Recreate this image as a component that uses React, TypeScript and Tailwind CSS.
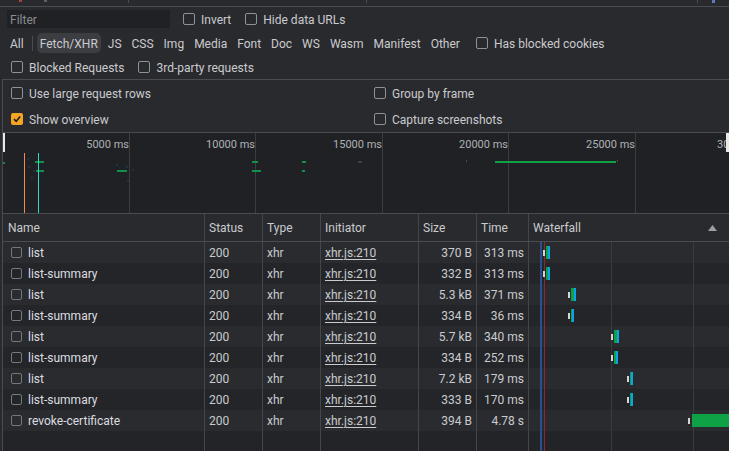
import React from "react";

interface Bar {
  left: number;
  width: number;
  kind: "w" | "g" | "b";
}

interface Req {
  name: string;
  size: string;
  time: string;
  bars: Bar[];
}

const reqs: Req[] = [
  { name: "list", size: "370 B", time: "313 ms", bars: [{ left: 14, width: 2, kind: "w" }, { left: 17, width: 2, kind: "g" }, { left: 19, width: 2, kind: "b" }] },
  { name: "list-summary", size: "332 B", time: "313 ms", bars: [{ left: 14, width: 2, kind: "w" }, { left: 17, width: 2, kind: "g" }, { left: 19, width: 2, kind: "b" }] },
  { name: "list", size: "5.3 kB", time: "371 ms", bars: [{ left: 39, width: 2, kind: "w" }, { left: 42, width: 3, kind: "g" }, { left: 45, width: 2, kind: "b" }] },
  { name: "list-summary", size: "334 B", time: "36 ms", bars: [{ left: 39, width: 2, kind: "w" }, { left: 42, width: 1, kind: "g" }, { left: 43, width: 2, kind: "b" }] },
  { name: "list", size: "5.7 kB", time: "340 ms", bars: [{ left: 82, width: 2, kind: "w" }, { left: 85, width: 3, kind: "g" }, { left: 88, width: 2, kind: "b" }] },
  { name: "list-summary", size: "334 B", time: "252 ms", bars: [{ left: 82, width: 2, kind: "w" }, { left: 85, width: 2, kind: "g" }, { left: 87, width: 2, kind: "b" }] },
  { name: "list", size: "7.2 kB", time: "179 ms", bars: [{ left: 98, width: 2, kind: "w" }, { left: 101, width: 1, kind: "g" }, { left: 102, width: 2, kind: "b" }] },
  { name: "list-summary", size: "333 B", time: "170 ms", bars: [{ left: 98, width: 2, kind: "w" }, { left: 101, width: 1, kind: "g" }, { left: 102, width: 2, kind: "b" }] },
  { name: "revoke-certificate", size: "394 B", time: "4.78 s", bars: [{ left: 159, width: 2, kind: "w" }, { left: 163, width: 40, kind: "g" }] },
];

const types = ["Fetch/XHR", "JS", "CSS", "Img", "Media", "Font", "Doc", "WS", "Wasm", "Manifest", "Other"];

// overview marks: [x, y, w, color]
const marks: [number, number, number, string][] = [
  [0, 29, 2, "#128a43"],
  [32, 28, 9, "#12904a"],
  [33, 37, 8, "#12904a"],
  [114, 37, 10, "#12904a"],
  [249, 28, 6, "#12904a"],
  [249, 37, 9, "#12904a"],
  [299, 28, 4, "#12904a"],
  [299, 37, 3, "#12904a"],
  [492, 28, 121, "#0ea145"],
  [24, 25, 2, "#1d3444"],
  [25, 33, 2, "#1d3444"],
  [28, 44, 2, "#1d3444"],
  [30, 37, 2, "#1d3444"],
  [113, 31, 2, "#1d3444"],
  [123, 33, 2, "#1d3444"],
  [124, 47, 2, "#1d3444"],
  [129, 36, 2, "#1d3444"],
  [355, 28, 4, "#3a3c40"],
  [463, 27, 1, "#4a4c50"],
  [614, 27, 1, "#4a4c50"],
];

const labels: [number, string][] = [
  [126, "5000 ms"],
  [252, "10000 ms"],
  [379, "15000 ms"],
  [505, "20000 ms"],
  [632, "25000 ms"],
];

function Box({ checked = false }: { checked?: boolean }) {
  if (checked) {
    return (
      <span className="flex h-[12px] w-[12px] shrink-0 items-center justify-center rounded-[2px] bg-[#f5a524]">
        <svg width="10" height="10" viewBox="0 0 10 10">
          <path d="M2 5.2 L4.2 7.3 L8.2 2.6" fill="none" stroke="#1f1f1f" strokeWidth="1.6" />
        </svg>
      </span>
    );
  }
  return <span className="h-[12px] w-[12px] shrink-0 rounded-[2px] border border-[#8e9196]" />;
}

function Check({ label, checked }: { label: string; checked?: boolean }) {
  return (
    <span className="flex items-center gap-[6px]">
      <Box checked={checked} />
      <span className="pt-[2px]">{label}</span>
    </span>
  );
}

const barColor = { w: "bg-[#d6d6d6]", g: "bg-[#0ea145]", b: "bg-[#0aa3ee]" };

export default function App() {
  return (
    <div className="flex h-[451px] w-[729px] flex-col overflow-hidden bg-[#292a2d] font-['Roboto',sans-serif] text-[12px] leading-none text-[#c9cbcf]">
      {/* clipped toolbar above */}
      <div className="relative h-[7px] shrink-0 border-b border-[#4a4c50]">
        <span className="absolute left-[19px] top-0 h-[2px] w-[3px] bg-[#a0443c]" />
        <span className="absolute left-[44px] top-0 h-[2px] w-[3px] bg-[#5f6368]" />
        <span className="absolute left-[128px] top-0 h-[3px] w-[1px] bg-[#4a4c50]" />
        <span className="absolute left-[366px] top-0 h-[3px] w-[1px] bg-[#4a4c50]" />
        <span className="absolute left-[697px] top-0 h-[3px] w-[1px] bg-[#4a4c50]" />
        <span className="absolute left-[712px] top-0 h-[3px] w-[3px] bg-[#5a7db8]" />
      </div>

      {/* filter row */}
      <div className="flex h-[24px] shrink-0 items-center pl-[7px]">
        <div className="flex h-[18px] w-[163px] items-center bg-[#202124] pl-[3px] pt-[1px] text-[#8a8d91]">Filter</div>
        <span className="ml-[13px]">
          <Check label="Invert" />
        </span>
        <span className="ml-[14px]">
          <Check label="Hide data URLs" />
        </span>
      </div>

      {/* type filters */}
      <div className="flex h-[24px] shrink-0 items-center pl-[10px]">
        <span className="pt-[2px]">All</span>
        <span className="ml-[8px] mr-[4px] h-[15px] w-[1px] bg-[#4a4c50]" />
        <div className="flex items-center gap-[4px]">
          {types.map((t, i) => (
            <span
              key={t}
              className={`flex h-[20px] items-center rounded-[5px] px-[3px] pt-[2px] ${i === 0 ? "bg-[#3c3d41]" : ""}`}
            >
              {t}
            </span>
          ))}
        </div>
        <span className="ml-[13px]">
          <Check label="Has blocked cookies" />
        </span>
      </div>

      <div className="flex h-[24px] shrink-0 items-center gap-[14px] pl-[11px]">
        <Check label="Blocked Requests" />
        <Check label="3rd-party requests" />
      </div>

      <div className="ml-[2px] flex min-h-0 flex-1 flex-col border-l border-t border-[#4a4c50]">
        {/* settings */}
        <div className="grid shrink-0 grid-cols-[363px_1fr] border-b border-[#4a4c50] pl-[8px]">
          <div className="flex h-[26px] items-center">
            <Check label="Use large request rows" />
          </div>
          <div className="flex h-[26px] items-center">
            <Check label="Group by frame" />
          </div>
          <div className="flex h-[26px] items-center">
            <Check label="Show overview" checked />
          </div>
          <div className="flex h-[26px] items-center">
            <Check label="Capture screenshots" />
          </div>
        </div>

        {/* overview */}
        <div className="relative h-[81px] shrink-0 border-b border-[#4a4c50] bg-[#202124] text-[11px] text-[#aeb1b5]">
          {labels.map(([x]) => (
            <span key={x} className="absolute top-0 h-full w-[1px] bg-[#3c3d41]" style={{ left: x }} />
          ))}
          {labels.map(([x, t]) => (
            <span key={t} className="absolute top-[6px] whitespace-nowrap" style={{ right: 724 - x + 2 }}>
              {t}
            </span>
          ))}
          <span className="absolute left-[714px] top-[6px] whitespace-nowrap">30000 ms</span>
          <span className="absolute left-0 top-0 h-[19px] w-[2px] bg-[#e8e8e8]" />
          <span className="absolute left-[723px] top-0 h-[19px] w-[3px] bg-[#e8e8e8]" />
          {marks.map(([x, y, w, c], i) => (
            <span key={i} className="absolute h-[2px]" style={{ left: x, top: y, width: w, background: c }} />
          ))}
          <span className="absolute left-[21px] top-[20px] h-[60px] w-[1px] bg-[#f28a4e]" />
          <span className="absolute left-[35px] top-[20px] h-[60px] w-[1px] bg-[#2fd9c6]" />
        </div>

        {/* table header */}
        <div className="grid h-[28px] shrink-0 grid-cols-[202px_58px_58px_98px_58px_52px_1fr] border-b border-[#4a4c50] text-[#c9cbcf]">
          <div className="flex items-center border-r border-[#44464a] pl-[5px] pt-[1px]">Name</div>
          <div className="flex items-center border-r border-[#44464a] pl-[4px] pt-[1px]">Status</div>
          <div className="flex items-center border-r border-[#44464a] pl-[4px] pt-[1px]">Type</div>
          <div className="flex items-center border-r border-[#44464a] pl-[4px] pt-[1px]">Initiator</div>
          <div className="flex items-center border-r border-[#44464a] pl-[4px] pt-[1px]">Size</div>
          <div className="flex items-center border-r border-[#44464a] pl-[4px] pt-[1px]">Time</div>
          <div className="flex items-center justify-between pl-[4px] pr-[12px] pt-[1px]">
            <span>Waterfall</span>
            <svg width="9" height="6" viewBox="0 0 9 6">
              <path d="M0 6 L4.5 0 L9 6 Z" fill="#9aa0a6" />
            </svg>
          </div>
        </div>

        {/* table body */}
        <div className="relative flex min-h-0 flex-1 flex-col bg-[#232427]">
          {reqs.map((r, i) => (
            <div
              key={i}
              className={`grid h-[21px] shrink-0 grid-cols-[202px_58px_58px_98px_58px_52px_1fr] ${
                i % 2 === 0 ? "bg-[#2a2b2e]" : "bg-[#242528]"
              }`}
            >
              <div className="flex items-center gap-[6px] border-r border-[#44464a] pl-[8px] text-[#dcdde0]">
                <span className="h-[11px] w-[11px] shrink-0 rounded-[2px] border border-[#75787c]" />
                <span className="pt-[1px]">{r.name}</span>
              </div>
              <div className="flex items-center border-r border-[#44464a] pl-[4px] pt-[1px]">200</div>
              <div className="flex items-center border-r border-[#44464a] pl-[4px] pt-[1px]">xhr</div>
              <div className="flex items-center border-r border-[#44464a] pl-[4px] pt-[1px]">
                <span className="underline underline-offset-2">xhr.js:210</span>
              </div>
              <div className="flex items-center justify-end border-r border-[#44464a] pr-[4px] pt-[1px]">{r.size}</div>
              <div className="flex items-center justify-end border-r border-[#44464a] pr-[4px] pt-[1px]">{r.time}</div>
              <div className="relative">
                {r.bars.map((b, j) => (
                  <span
                    key={j}
                    className={`absolute z-10 ${barColor[b.kind]} ${b.kind === "w" ? "top-[8px] h-[6px]" : "top-[4px] h-[13px]"}`}
                    style={{ left: b.left, width: b.width }}
                  />
                ))}
              </div>
            </div>
          ))}
          <div className="grid min-h-0 flex-1 grid-cols-[202px_58px_58px_98px_58px_52px_1fr]">
            <div className="border-r border-[#44464a]" />
            <div className="border-r border-[#44464a]" />
            <div className="border-r border-[#44464a]" />
            <div className="border-r border-[#44464a]" />
            <div className="border-r border-[#44464a]" />
            <div className="border-r border-[#44464a]" />
            <div />
          </div>
          {/* waterfall guide lines */}
          <span className="pointer-events-none absolute top-0 h-full w-[2px] bg-[#27508c]" style={{ left: 537 }} />
          <span className="pointer-events-none absolute top-0 h-full w-[1px] bg-[#8c2b2b]" style={{ left: 541 }} />
          <span className="pointer-events-none absolute top-0 h-full w-[1px] bg-[#3a3b3f]" style={{ left: 608 }} />
          <span className="pointer-events-none absolute top-0 h-full w-[1px] bg-[#3a3b3f]" style={{ left: 690 }} />
        </div>
      </div>
    </div>
  );
}
